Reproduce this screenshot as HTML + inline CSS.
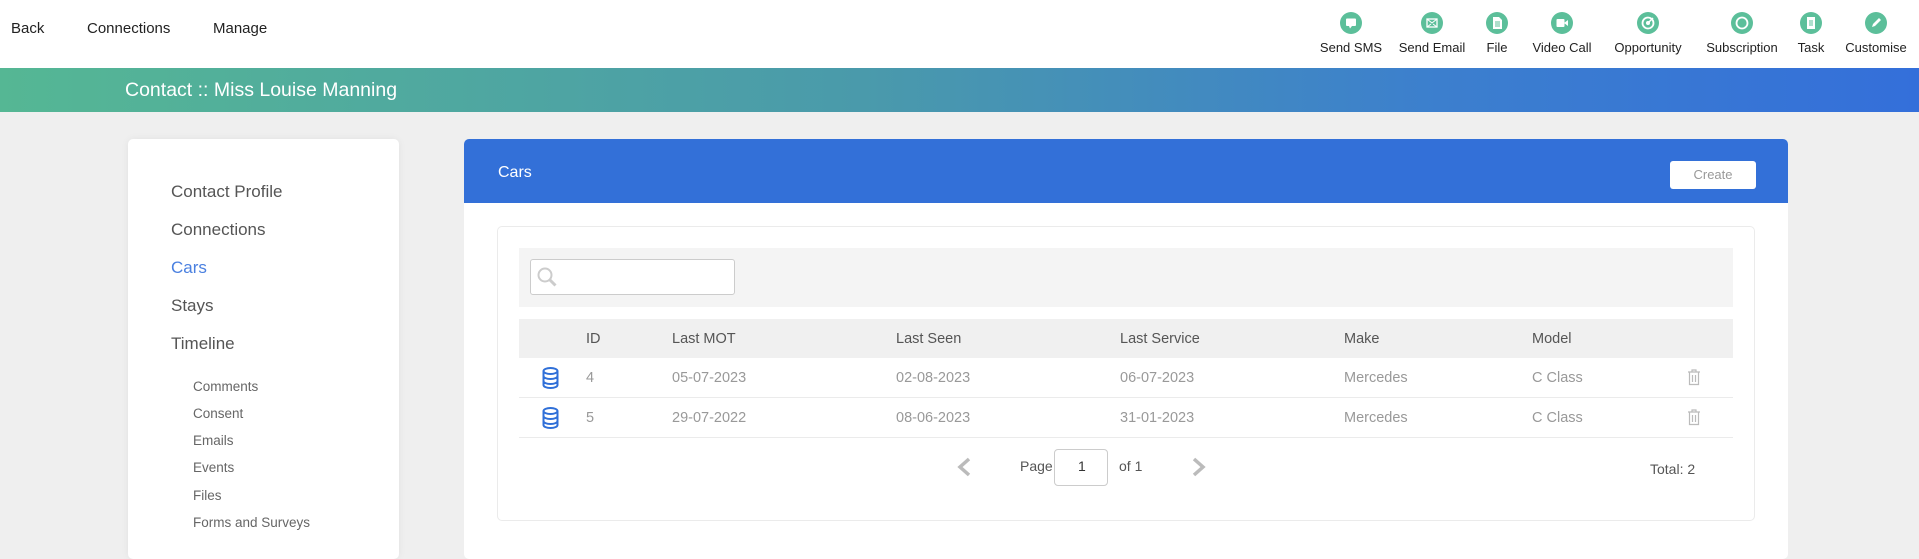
<!DOCTYPE html>
<html><head><meta charset="utf-8"><style>
*{box-sizing:border-box;margin:0;padding:0}
body{width:1919px;height:533px;overflow:hidden;background:#efefef;font-family:"Liberation Sans",sans-serif;position:relative;color:#333}
.a{position:absolute;white-space:nowrap}
.top{position:absolute;left:0;top:0;width:1919px;height:68px;background:#fff}
.nav{font-size:15px;color:#222;top:20px}
.ic{position:absolute;top:12px;width:22px;height:22px;border-radius:50%;background:#5cbf9a}
.ic svg{position:absolute;left:0;top:0}
.lbl{font-size:13px;color:#222;top:40px;transform:translateX(-50%)}
.bar{position:absolute;left:0;top:68px;width:1919px;height:44px;background:linear-gradient(90deg,#55b794 0%,#4a9aab 45%,#3c7fce 75%,#346fda 100%)}
.side{position:absolute;left:128px;top:139px;width:271px;height:420px;background:#fff;border-radius:5px;box-shadow:0 0 8px rgba(0,0,0,.06)}
.si{font-size:17px;color:#555;left:171px}
.ss{font-size:13.5px;color:#666;left:193px}
.card{position:absolute;left:464px;top:139px;width:1324px;height:420px;background:#fff;border-radius:5px}
.hdr{position:absolute;left:464px;top:139px;width:1324px;height:64px;background:#3370d8;border-radius:5px 5px 0 0}
.inner{position:absolute;left:497px;top:226px;width:1258px;height:295px;border:1px solid #ebebeb;border-radius:5px}
.th{font-size:14.5px;color:#555;top:331px}
.td{font-size:14.5px;color:#999}
</style></head><body>
<div class="top"></div>
<div class="a nav" style="left:11px">Back</div>
<div class="a nav" style="left:87px">Connections</div>
<div class="a nav" style="left:213px">Manage</div>

<div class="ic" style="left:1340px"><svg width="22" height="22"><rect x="6" y="6.5" width="10" height="7.5" rx="1" fill="#fff"/><path d="M9 14l1 2.5 2-2.5z" fill="#fff"/></svg></div>
<div class="ic" style="left:1421px"><svg width="22" height="22"><rect x="6" y="7" width="10" height="8" fill="none" stroke="#fff" stroke-width="1.3"/><path d="M6 7l5 4 5-4M6 15l4-3M16 15l-4-3" fill="none" stroke="#fff" stroke-width="1"/></svg></div>
<div class="ic" style="left:1486px"><svg width="22" height="22"><path d="M7 5h6l3 3v9H7z" fill="#fff"/><path d="M9 10h5M9 12h5M9 14h5" stroke="#5cbf9a" stroke-width=".9"/></svg></div>
<div class="ic" style="left:1551px"><svg width="22" height="22"><rect x="5.5" y="7" width="8" height="8" rx="1" fill="#fff"/><path d="M13 11l4-3v6z" fill="#fff"/></svg></div>
<div class="ic" style="left:1637px"><svg width="22" height="22"><circle cx="11" cy="11" r="5.5" fill="none" stroke="#fff" stroke-width="1.8"/><circle cx="11" cy="11" r="2" fill="#fff"/><path d="M11 11l5-5" stroke="#fff" stroke-width="1.5"/></svg></div>
<div class="ic" style="left:1731px"><svg width="22" height="22"><circle cx="11" cy="11" r="5.5" fill="none" stroke="#fff" stroke-width="1.8"/></svg></div>
<div class="ic" style="left:1800px"><svg width="22" height="22"><path d="M7 5h8v12H7z" fill="#fff"/><path d="M9 9h4M9 11h4M9 13h4" stroke="#5cbf9a" stroke-width=".9"/></svg></div>
<div class="ic" style="left:1865px"><svg width="22" height="22"><path d="M7 15l1-3 6-6 2 2-6 6z" fill="#fff"/></svg></div>
<div class="a lbl" style="left:1351px">Send SMS</div>
<div class="a lbl" style="left:1432px">Send Email</div>
<div class="a lbl" style="left:1497px">File</div>
<div class="a lbl" style="left:1562px">Video Call</div>
<div class="a lbl" style="left:1648px">Opportunity</div>
<div class="a lbl" style="left:1742px">Subscription</div>
<div class="a lbl" style="left:1811px">Task</div>
<div class="a lbl" style="left:1876px">Customise</div>

<div class="bar"></div>
<div class="a" style="left:125px;top:79px;font-size:19.5px;color:#fff">Contact :: Miss Louise Manning</div>

<div class="side"></div>
<div class="a si" style="top:182px">Contact Profile</div>
<div class="a si" style="top:220px">Connections</div>
<div class="a si" style="top:258px;color:#4a80e0">Cars</div>
<div class="a si" style="top:296px">Stays</div>
<div class="a si" style="top:334px">Timeline</div>
<div class="a ss" style="top:379px">Comments</div>
<div class="a ss" style="top:406px">Consent</div>
<div class="a ss" style="top:433px">Emails</div>
<div class="a ss" style="top:460px">Events</div>
<div class="a ss" style="top:488px">Files</div>
<div class="a ss" style="top:515px">Forms and Surveys</div>

<div class="card"></div>
<div class="hdr"></div>
<div class="a" style="left:498px;top:164px;font-size:16px;color:#fff">Cars</div>
<div class="a" style="left:1670px;top:161px;width:86px;height:28px;background:#fff;border-radius:3px;font-size:13px;color:#999;text-align:center;line-height:28px">Create</div>

<div class="inner"></div>
<div class="a" style="left:519px;top:248px;width:1214px;height:59px;background:#f4f4f4"></div>
<div class="a" style="left:530px;top:259px;width:205px;height:36px;background:#fff;border:1px solid #ccc;border-radius:3px"><svg width="30" height="34" style="position:absolute;left:2px;top:0"><circle cx="12" cy="15" r="6.5" fill="none" stroke="#ccc" stroke-width="2"/><path d="M16.5 19.5l6 6" stroke="#ccc" stroke-width="3"/></svg></div>

<div class="a" style="left:519px;top:319px;width:1214px;height:39px;background:#f0f0f0"></div>
<div class="a th" style="left:586px">ID</div>
<div class="a th" style="left:672px">Last MOT</div>
<div class="a th" style="left:896px">Last Seen</div>
<div class="a th" style="left:1120px">Last Service</div>
<div class="a th" style="left:1344px">Make</div>
<div class="a th" style="left:1532px">Model</div>

<div class="a" style="left:519px;top:397px;width:1214px;height:1px;background:#ebebeb"></div>
<div class="a" style="left:519px;top:437px;width:1214px;height:1px;background:#ebebeb"></div>

<svg class="a" style="left:542px;top:367px" width="17" height="22"><g fill="none" stroke="#2f6fd8" stroke-width="2"><ellipse cx="8.5" cy="4" rx="7" ry="3"/><path d="M1.5 4v14c0 1.7 3 3 7 3s7-1.3 7-3V4M1.5 9c0 1.7 3 3 7 3s7-1.3 7-3M1.5 14c0 1.7 3 3 7 3s7-1.3 7-3"/></g></svg>
<svg class="a" style="left:542px;top:407px" width="17" height="22"><g fill="none" stroke="#2f6fd8" stroke-width="2"><ellipse cx="8.5" cy="4" rx="7" ry="3"/><path d="M1.5 4v14c0 1.7 3 3 7 3s7-1.3 7-3V4M1.5 9c0 1.7 3 3 7 3s7-1.3 7-3M1.5 14c0 1.7 3 3 7 3s7-1.3 7-3"/></g></svg>

<div class="a td" style="left:586px;top:370px">4</div>
<div class="a td" style="left:672px;top:370px">05-07-2023</div>
<div class="a td" style="left:896px;top:370px">02-08-2023</div>
<div class="a td" style="left:1120px;top:370px">06-07-2023</div>
<div class="a td" style="left:1344px;top:370px">Mercedes</div>
<div class="a td" style="left:1532px;top:370px">C Class</div>
<div class="a td" style="left:586px;top:410px">5</div>
<div class="a td" style="left:672px;top:410px">29-07-2022</div>
<div class="a td" style="left:896px;top:410px">08-06-2023</div>
<div class="a td" style="left:1120px;top:410px">31-01-2023</div>
<div class="a td" style="left:1344px;top:410px">Mercedes</div>
<div class="a td" style="left:1532px;top:410px">C Class</div>

<svg class="a" style="left:1687px;top:369px" width="14" height="17"><g fill="none" stroke="#bbb" stroke-width="1.2"><path d="M1 3h12M5 3V1h4v2M2.5 3.5v12h9v-12M5.5 6v7M8.5 6v7"/></g></svg>
<svg class="a" style="left:1687px;top:409px" width="14" height="17"><g fill="none" stroke="#bbb" stroke-width="1.2"><path d="M1 3h12M5 3V1h4v2M2.5 3.5v12h9v-12M5.5 6v7M8.5 6v7"/></g></svg>

<svg class="a" style="left:955px;top:457px" width="18" height="20"><path d="M14 2L5 10l9 8" fill="none" stroke="#bbb" stroke-width="3.5"/></svg>
<div class="a" style="left:1020px;top:458px;font-size:14px;color:#555">Page</div>
<div class="a" style="left:1054px;top:449px;width:54px;height:37px;border:1px solid #ccc;border-radius:4px;font-size:14px;color:#333;padding:8px 0 0 23px">1</div>
<div class="a" style="left:1119px;top:458px;font-size:14px;color:#555">of 1</div>
<svg class="a" style="left:1190px;top:457px" width="18" height="20"><path d="M4 2l9 8-9 8" fill="none" stroke="#bbb" stroke-width="3.5"/></svg>
<div class="a" style="left:1650px;top:461px;font-size:14px;color:#555">Total: 2</div>
</body></html>
